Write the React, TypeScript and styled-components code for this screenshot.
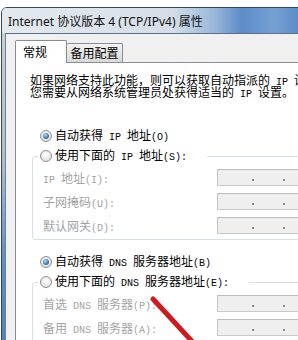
import styled, { createGlobalStyle } from "styled-components";

const GlobalStyle = createGlobalStyle`
  html, body {
    margin: 0;
    padding: 0;
    background: #ffffff;
  }
  body {
    width: 298px;
    height: 340px;
    overflow: hidden;
  }
`;

const Screen = styled.div`
  position: relative;
  width: 298px;
  height: 340px;
  overflow: hidden;
  box-sizing: border-box;
  padding-top: 7px;
  background: #ffffff;
  font-family: "Noto Sans CJK SC", sans-serif;
  font-size: 12px;
  color: #000000;
`;

const Window = styled.div`
  margin-left: 1px;
  width: 480px;
  height: 400px;
  display: flex;
  flex-direction: column;
  border: 1px solid #34475f;
  border-radius: 6px 0 0 0;
  overflow: hidden;
`;

const TitleBar = styled.div`
  height: 25px;
  flex-shrink: 0;
  display: flex;
  align-items: center;
  padding-left: 6px;
  background: linear-gradient(
    90deg,
    #e4e9ef 0px,
    #d5dee8 170px,
    #9bb8da 212px,
    #5b8bc8 240px,
    #75a0d3 272px,
    #4f83c3 310px,
    #4a7fc0 480px
  );
  font-family: "Noto Sans", "Noto Sans CJK SC", sans-serif;
  font-size: 12px;
  color: #111111;
  white-space: nowrap;
`;

const Frame = styled.div`
  flex: 1;
  display: flex;
  padding-left: 3px;
  background: linear-gradient(180deg, #c9d0d8 0%, #aebccb 35%, #5e90c7 60%, #3f78ba 100%);
`;

const Client = styled.div`
  flex: 1;
  display: flex;
  flex-direction: column;
  padding: 6px 0 0 9px;
  border-left: 1px solid #6f8197;
  border-top: 1px solid #5c6f87;
  background: #f0f0f0;
`;

const TabStrip = styled.div`
  position: relative;
  z-index: 1;
  display: flex;
  align-items: flex-end;
  height: 23px;
  margin-bottom: -1px;
`;

const Tab = styled.div<{ $active?: boolean }>`
  box-sizing: border-box;
  width: ${(p) => (p.$active ? 52 : 56)}px;
  height: ${(p) => (p.$active ? 23 : 19)}px;
  margin-bottom: ${(p) => (p.$active ? 0 : 1)}px;
  display: flex;
  align-items: center;
  justify-content: ${(p) => (p.$active ? "flex-start" : "center")};
  padding-left: ${(p) => (p.$active ? 7 : 0)}px;
  border: 1px solid #898c95;
  border-bottom: none;
  border-left: ${(p) => (p.$active ? "1px solid #898c95" : "none")};
  border-radius: 2px 2px 0 0;
  background: ${(p) =>
    p.$active ? "#ffffff" : "linear-gradient(180deg, #f3f3f3 0%, #e6e6e6 50%, #d9d9d9 100%)"};
  line-height: 12px;
`;

const Panel = styled.div`
  flex: 1;
  padding-top: 11px;
  border-top: 1px solid #898c95;
  border-left: 1px solid #898c95;
  background: #ffffff;
`;

const Intro = styled.div`
  padding-left: 14px;
  line-height: 12px;
  white-space: nowrap;
`;

const Line = styled.div`
  height: 12px;
`;

const Latin = styled.span`
  font-family: "Liberation Mono", monospace;
  font-size: 10px;
`;

const OptionRow = styled.div<{ $top: number }>`
  display: flex;
  align-items: center;
  height: 16px;
  margin-top: ${(p) => p.$top}px;
  padding-left: 24px;
  white-space: nowrap;
`;

const OptionText = styled.span`
  white-space: pre;
  line-height: 16px;
`;

const Radio = styled.span<{ $checked?: boolean }>`
  position: relative;
  box-sizing: border-box;
  width: 12px;
  height: 12px;
  margin-right: 3px;
  flex-shrink: 0;
  border: 1px solid #8e8f8f;
  border-radius: 50%;
  background: radial-gradient(circle at 50% 40%, #ffffff 0%, #eaeaea 55%, #cfcfcf 100%);

  &::after {
    content: "";
    display: ${(p) => (p.$checked ? "block" : "none")};
    position: absolute;
    left: 2px;
    top: 2px;
    width: 6px;
    height: 6px;
    border-radius: 50%;
    background: radial-gradient(circle at 40% 35%, #b6dbf5 0%, #4f8fc6 45%, #163f6b 100%);
  }
`;

const Group = styled.fieldset<{ $pb: number }>`
  margin: 4px 0 0 16px;
  padding: 1px 0 ${(p) => p.$pb}px 0;
  min-width: 0;
  border: 1px solid #d5dfe5;
  border-radius: 3px;
`;

const Legend = styled.legend`
  display: flex;
  align-items: center;
  height: 16px;
  margin-left: 5px;
  padding: 0 20px 0 2px;
  white-space: nowrap;
`;

const FieldRow = styled.div`
  display: flex;
  align-items: center;
  height: 24px;
  padding-left: 10px;
`;

const FieldLabel = styled.span`
  width: 174px;
  flex-shrink: 0;
  color: #a3a3a3;
  white-space: pre;
`;

const IpBox = styled.div`
  box-sizing: border-box;
  width: 200px;
  height: 17px;
  display: flex;
  align-items: flex-end;
  padding: 0 0 4px 34px;
  border: 1px solid #c9c9c9;
  border-top-color: #bdbdbd;
  background: #efefef;
`;

const Dot = styled.span`
  width: 2px;
  height: 2px;
  margin-right: 29px;
  border-radius: 50%;
  background: #6e6e6e;
`;

const Annotation = styled.svg`
  position: absolute;
  left: 0;
  top: 0;
  pointer-events: none;
`;

function mixed(text: string) {
  return text
    .split(/([\x00-\xff]+)/)
    .filter(Boolean)
    .map((part, i) => (/^[\x00-\xff]+$/.test(part) ? <Latin key={i}>{part}</Latin> : part));
}

function IpField({ label }: { label: string }) {
  return (
    <FieldRow>
      <FieldLabel>{mixed(label)}</FieldLabel>
      <IpBox>
        <Dot />
        <Dot />
        <Dot />
      </IpBox>
    </FieldRow>
  );
}

const ipFields = ["IP 地址(I):", "子网掩码(U):", "默认网关(D):"];
const dnsFields = ["首选 DNS 服务器(P):", "备用 DNS 服务器(A):"];

export default function App() {
  return (
    <Screen>
      <GlobalStyle />
      <Window>
        <TitleBar>Internet 协议版本 4 (TCP/IPv4) 属性</TitleBar>
        <Frame>
          <Client>
            <TabStrip>
              <Tab $active>常规</Tab>
              <Tab>备用配置</Tab>
            </TabStrip>
            <Panel>
              <Intro>
                <Line>{mixed("如果网络支持此功能，则可以获取自动指派的 IP 设置。否则，")}</Line>
                <Line>{mixed("您需要从网络系统管理员处获得适当的 IP 设置。")}</Line>
              </Intro>

              <OptionRow $top={30}>
                <Radio $checked />
                <OptionText>{mixed("自动获得 IP 地址(O)")}</OptionText>
              </OptionRow>
              <Group $pb={2}>
                <Legend>
                  <Radio />
                  <OptionText>{mixed("使用下面的 IP 地址(S):")}</OptionText>
                </Legend>
                {ipFields.map((f) => (
                  <IpField key={f} label={f} />
                ))}
              </Group>

              <OptionRow $top={14}>
                <Radio $checked />
                <OptionText>{mixed("自动获得 DNS 服务器地址(B)")}</OptionText>
              </OptionRow>
              <Group $pb={2}>
                <Legend>
                  <Radio />
                  <OptionText>{mixed("使用下面的 DNS 服务器地址(E):")}</OptionText>
                </Legend>
                {dnsFields.map((f) => (
                  <IpField key={f} label={f} />
                ))}
              </Group>
            </Panel>
          </Client>
        </Frame>
      </Window>
      <Annotation width="298" height="340" viewBox="0 0 298 340">
        <line x1="153" y1="299" x2="200" y2="350" stroke="#cf1a1f" strokeWidth="5" strokeLinecap="round" />
      </Annotation>
    </Screen>
  );
}
